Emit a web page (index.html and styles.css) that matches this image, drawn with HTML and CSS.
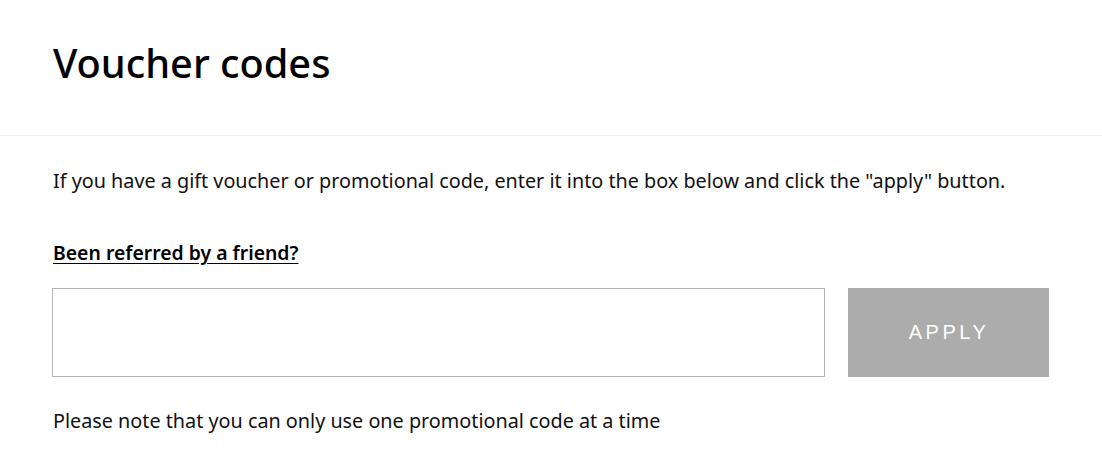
FILE: index.html
```html
<!DOCTYPE html>
<html lang="en">
<head>
<meta charset="utf-8">
<title>Voucher codes</title>
<link rel="stylesheet" href="styles.css">
</head>
<body>
<header class="page-header">
  <h1 class="title">Voucher codes</h1>
</header>
<main class="content">
  <p class="intro">If you have a gift voucher or promotional code, enter it into the box below and click the "apply" button.</p>
  <a class="referral" href="#">Been referred by a friend?</a>
  <form class="voucher-form">
    <input class="voucher-input" type="text" aria-label="Voucher code">
    <button class="apply-btn" type="button">APPLY</button>
  </form>
  <p class="note">Please note that you can only use one promotional code at a time</p>
</main>
</body>
</html>
```
FILE: styles.css
```css
html, body {
  margin: 0;
  padding: 0;
  background: #fff;
}
body {
  font-family: "Noto Sans", "Open Sans", sans-serif;
  color: #111;
}
.page-header {
  padding: 37px 53px 0 53px;
  height: 136px;
  box-sizing: border-box;
  border-bottom: 1px solid #efefef;
}
.title {
  margin: 0;
  font-size: 39.7px;
  font-weight: 500;
  line-height: 52px;
  color: #000;
}
.content {
  padding: 0 53px 0 52px;
  display: flex;
  flex-direction: column;
}
.intro {
  margin: 32px 0 0;
  padding-left: 1px;
  font-size: 19.8px;
  line-height: 26px;
}
.referral {
  margin-top: 46px;
  margin-left: 1px;
  align-self: flex-start;
  font-size: 19.4px;
  line-height: 26px;
  font-weight: 600;
  color: #000;
  text-decoration: underline;
  text-underline-offset: 3px;
}
.voucher-form {
  margin: 22px 0 0;
  display: flex;
  gap: 23px;
}
.voucher-input {
  flex: 1;
  height: 89px;
  box-sizing: border-box;
  border: 1px solid #b5b5b5;
  margin: 0;
  padding: 0 16px;
  font-size: 18px;
}
.apply-btn {
  width: 201px;
  height: 89px;
  border: 0;
  margin: 0;
  background: #acacac;
  color: #fff;
  font-family: "Liberation Sans", Arial, sans-serif;
  font-size: 20px;
  letter-spacing: 3.5px;
  padding: 0 0 0 1px;
}
.note {
  margin: 31px 0 0;
  padding-left: 1px;
  font-size: 19.8px;
  line-height: 26px;
}
```
